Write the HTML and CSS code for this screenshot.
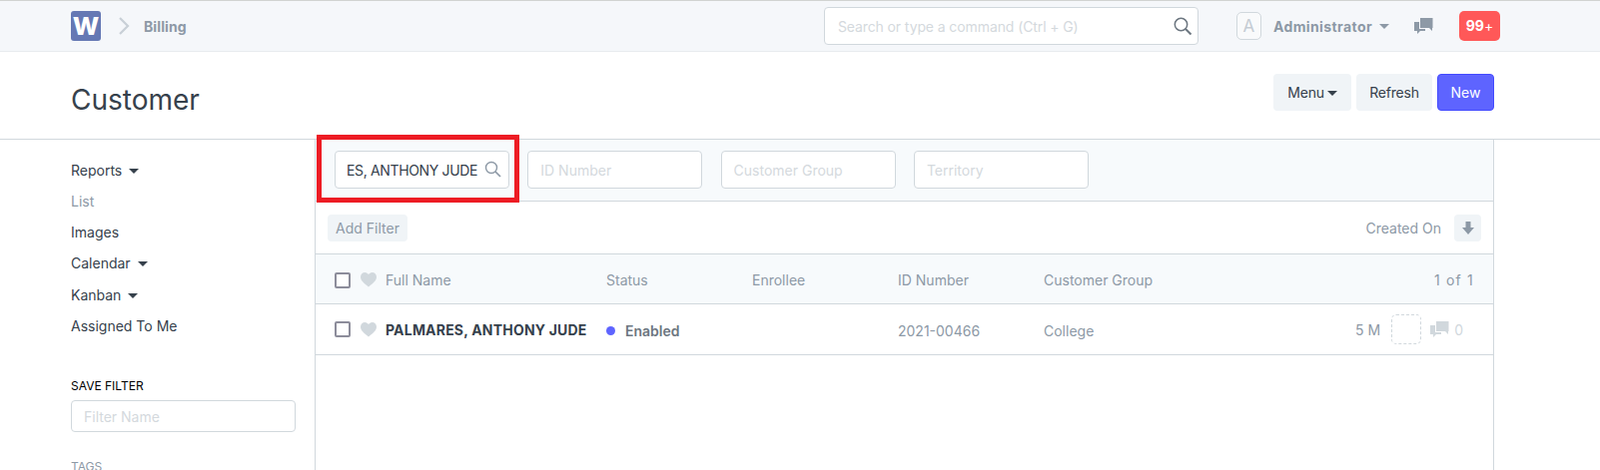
FILE: index.html
```html
<!DOCTYPE html>
<html lang="en">
<head>
<meta charset="utf-8">
<title>Customer</title>
<link rel="stylesheet" href="styles.css">
</head>
<body>
<header class="navbar">
  <div class="logo">W</div>
  <svg class="crumb-chevron" width="12" height="20" viewBox="0 0 12 20"><path d="M2 2l8 8-8 8" fill="none" stroke="#c8cfd6" stroke-width="2.2"/></svg>
  <span class="crumb">Billing</span>
  <div class="nav-search">
    <span>Search or type a command (Ctrl + G)</span>
    <svg width="20" height="20" viewBox="0 0 20 20"><circle cx="8.5" cy="8.5" r="6.2" fill="none" stroke="#6c7680" stroke-width="1.5"/><path d="M13 13l5.5 5.5" stroke="#6c7680" stroke-width="2"/></svg>
  </div>
  <div class="avatar">A</div>
  <span class="user">Administrator</span>
  <span class="caret caret-light"></span>
  <svg class="nav-chat" width="20" height="18" viewBox="0 0 20 18"><path d="M7 1h12.500v10H19v3l-3-3H7z" fill="#8d99a6"/><path d="M1 5h5v7h6v2H7l-3 3v-3H1z" fill="#8d99a6"/></svg>
  <div class="badge">99<small>+</small></div>
</header>

<section class="page-head">
  <h1>Customer</h1>
  <div class="actions">
    <button class="btn btn-menu">Menu<span class="caret"></span></button>
    <button class="btn btn-refresh">Refresh</button>
    <button class="btn btn-new">New</button>
  </div>
</section>

<div class="layout">
  <aside class="sidebar">
    <ul class="side-menu">
      <li>Reports <span class="caret"></span></li>
      <li class="muted">List</li>
      <li>Images</li>
      <li>Calendar <span class="caret"></span></li>
      <li>Kanban <span class="caret"></span></li>
      <li>Assigned To Me</li>
    </ul>
    <h6 class="save-label">Save Filter</h6>
    <input class="field filter-name" placeholder="Filter Name">
    <h6 class="tags-label">Tags</h6>
  </aside>

  <main class="list">
    <div class="highlight"></div>
    <div class="filters">
      <div class="search-field">
        <input class="field" value="ES, ANTHONY JUDE">
        <svg width="17" height="17" viewBox="0 0 17 17"><circle cx="7" cy="7" r="5.5" fill="none" stroke="#8d99a6" stroke-width="1.4"/><path d="M11 11l5 5" stroke="#8d99a6" stroke-width="1.7"/></svg>
      </div>
      <input class="field" placeholder="ID Number">
      <input class="field" placeholder="Customer Group">
      <input class="field" placeholder="Territory">
    </div>
    <div class="filter-bar">
      <button class="btn btn-filter">Add Filter</button>
      <span class="sort-label">Created On</span>
      <button class="btn btn-sort"><svg width="14" height="15" viewBox="0 0 14 15"><path d="M4.500 1h5v6H13l-6 7-6-7h3.500z" fill="#8d99a6"/></svg></button>
    </div>
    <div class="row row-head">
      <div class="subject"><span class="check"></span><svg class="heart" width="16" height="15" viewBox="0 0 16 15"><path d="M8 14.500C3 10.500 0 8 0 4.500 0 2 2 0 4.300 0 6 0 7.300 1 8 2.200 8.700 1 10 0 11.700 0 14 0 16 2 16 4.500 16 8 13 10.500 8 14.500z" fill="#d1d8dd"/></svg><span>Full Name</span></div>
      <div>Status</div>
      <div>Enrollee</div>
      <div>ID Number</div>
      <div>Customer Group</div>
      <div class="end">1 of 1</div>
    </div>
    <div class="row row-item">
      <div class="subject"><span class="check"></span><svg class="heart" width="16" height="15" viewBox="0 0 16 15"><path d="M8 14.500C3 10.500 0 8 0 4.500 0 2 2 0 4.300 0 6 0 7.300 1 8 2.200 8.700 1 10 0 11.700 0 14 0 16 2 16 4.500 16 8 13 10.500 8 14.500z" fill="#d1d8dd"/></svg><strong>PALMARES, ANTHONY JUDE</strong></div>
      <div class="status"><span class="dot"></span>Enabled</div>
      <div></div>
      <div class="cell">2021-00466</div>
      <div class="cell">College</div>
      <div class="meta">
        <span>5 M</span>
        <span class="assign"></span>
        <svg width="20" height="18" viewBox="0 0 20 18"><path d="M7 1h12.500v10H19v3l-3-3H7z" fill="#d1d8dd"/><path d="M1 5h5v7h6v2H7l-3 3v-3H1z" fill="#d1d8dd"/></svg>
        <span class="count">0</span>
      </div>
    </div>
  </main>
</div>
</body>
</html>
```
FILE: styles.css
```css
* { box-sizing: border-box; }
html, body { margin: 0; height: 471px; overflow: hidden; }
body { font-family: Inter, "Noto Sans", sans-serif; font-size: 14px; color: #36414c; background: #fff; }

.navbar { display: flex; align-items: center; height: 52px; padding: 0 100px 0 71px; background: #f5f7fa; border-top: 1px solid #d1d3d1; border-bottom: 1px solid #e8ebee; }
.logo { width: 30px; height: 30px; background: #6578b4; border-radius: 3px; color: #fff; font-weight: 800; font-size: 25px; line-height: 30px; text-align: center; }
.crumb-chevron { margin-left: 17px; }
.crumb { margin-left: 14px; font-weight: 700; color: #8d99a6; letter-spacing: 0.1px; }
.nav-search { display: flex; align-items: center; justify-content: space-between; width: 375px; height: 38px; margin-left: auto; padding: 0 5px 0 13px; background: #fff; border: 1px solid #d1d8dd; border-radius: 4px; color: #d4d9dd; letter-spacing: -0.1px; }
.avatar { width: 25px; height: 28px; margin-left: 38px; border: 1px solid #d1d8dd; border-radius: 5px; color: #c5ccd3; font-size: 17px; line-height: 26px; text-align: center; background: #f9fafb; }
.user { margin-left: 12px; font-weight: 700; color: #8d99a6; letter-spacing: 0.4px; }
.caret { display: inline-block; width: 0; height: 0; margin-left: 3px; vertical-align: 2px; border: 5px solid transparent; border-top-color: #36414c; border-bottom: 0; }
.caret-light { margin-left: 7px; border-top-color: #8d99a6; }
.nav-chat { margin-left: 24px; }
.badge { width: 41px; height: 30px; margin-left: 26px; background: #ff5858; border-radius: 5px; color: #fff; font-weight: 700; line-height: 30px; text-align: center; }
.badge small { font-size: 14px; font-weight: 400; }

.page-head { display: flex; align-items: center; justify-content: space-between; height: 88px; padding: 0 106px 0 71px; border-bottom: 1px solid #d1d8dd; }
h1 { margin: 8px 0 0; font-size: 28px; font-weight: 400; color: #36414c; }
.actions { display: flex; gap: 5px; margin-top: -7px; }
.btn { height: 37px; border: 1px solid transparent; border-radius: 4px; background: #f0f4f7; color: #36414c; font: inherit; padding: 0; }
.btn-menu { width: 78px; letter-spacing: -0.2px; }
.btn-refresh { width: 76px; letter-spacing: -0.2px; }
.btn-new { width: 57px; background: #5e64ff; border-color: #444bff; color: #fff; }

.layout { display: flex; height: 332px; }
.sidebar { width: 244px; margin-left: 71px; padding-top: 15px; flex: none; }
.side-menu { margin: 0; padding: 0; list-style: none; }
.side-menu li { height: 31.15px; line-height: 31px; }
.muted { color: #8d99a6; }
.save-label, .tags-label { margin: 0; font-size: 12px; font-weight: 400; text-transform: uppercase; }
.save-label { margin-top: 35.500px; line-height: 20px; color: #000; }
.filter-name { width: 225px !important; height: 32px !important; margin-top: 4px; padding-left: 13px; }
.tags-label { margin-top: 25px; color: #8d99a6; line-height: 20px; }

.list { position: relative; width: 1181px; border-left: 1px solid #d1d8dd; border-right: 1px solid #d1d8dd; }
.highlight { position: absolute; left: 1px; top: -5px; width: 203px; height: 68px; border: 5px solid #ed1c24; pointer-events: none; }
.filters { display: flex; gap: 18.3px; align-items: center; height: 62px; padding: 0 0 2px 19px; background: #f7fafc; border-bottom: 1px solid #d1d8dd; }
.field { width: 175px; height: 38px; padding: 1px 12px 0; border: 1px solid #d1d8dd; border-radius: 4px; background: #fff; color: #36414c; font: inherit; outline: none; }
.field::placeholder { color: #d4d9dd; opacity: 1; }
.search-field { position: relative; display: flex; align-items: center; }
.search-field .field { padding-left: 11px; letter-spacing: -0.35px; }
.search-field svg { position: absolute; right: 8px; }
.filter-bar { display: flex; align-items: center; height: 53px; padding: 0 12px 0 12px; border-bottom: 1px solid #d1d8dd; }
.btn-filter { width: 80px; height: 27px; border: 0; color: #8d99a6; }
.sort-label { margin-left: auto; color: #8d99a6; }
.btn-sort { display: flex; align-items: center; justify-content: center; width: 27px; height: 27px; margin-left: 13px; border: 0; }

.row { display: grid; grid-template-columns: 272px 146px 146px 146px 1fr auto; align-items: center; padding: 0 19px; border-bottom: 1px solid #d1d8dd; color: #8d99a6; }
.row-head { height: 50px; background: #f7fafc; padding-top: 2px; }
.row-item { height: 51px; }
.subject { display: flex; align-items: center; }
.check { width: 16px; height: 16px; border: 2px solid #8d8d9b; border-radius: 2px; background: #fff; flex: none; }
.heart { margin: 0 9px 0 10px; flex: none; }
.subject strong { color: #36414c; font-weight: 700; white-space: nowrap; letter-spacing: 0.2px; }
.status { display: flex; align-items: center; font-weight: 600; color: #6c7680; padding-top: 3px; }
.cell { padding-top: 3px; }
.dot { width: 9px; height: 9px; margin-right: 10px; border-radius: 50%; background: #5e64ff; }
.end { text-align: right; letter-spacing: 1.2px; }
.meta { display: flex; align-items: center; gap: 9px; margin-right: 11px; }
.assign { width: 30px; height: 30px; margin: 0 -1px 0 2px; border: 1px dashed #d1d8dd; border-radius: 5px; }
.count { margin-left: -4px; color: #d1d8dd; }
```
